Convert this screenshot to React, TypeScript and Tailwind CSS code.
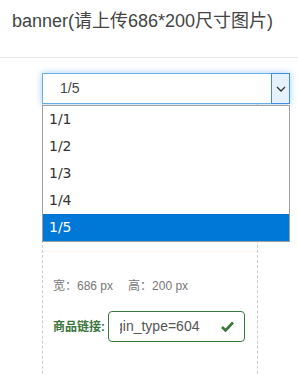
import React from "react";

const items = ["1/1", "1/2", "1/3", "1/4", "1/5"];

export default function App() {
  return (
    <div
      className="w-[298px] h-[375px] bg-white overflow-hidden"
      style={{ fontFamily: '"Liberation Sans", "Noto Sans CJK SC", sans-serif' }}
    >
      <div className="h-[58px] border-b border-[#e8e8e8] pl-[12px] pt-[9px] text-[18px] leading-[24px] text-[#444]">
        banner(请上传686*200尺寸图片)
      </div>

      <div className="relative ml-[42px] mt-[15px] w-[248px]">
        <div className="relative h-[31px] border border-[#66afe9] shadow-[0_0_7px_rgba(102,175,233,0.6)] bg-white flex items-center pl-[17px] text-[14px] text-[#444]">
          1/5
          <div className="absolute right-[-1px] top-[-1px] bottom-[-1px] w-[19px] bg-[#e5f1fb] border border-[#3c8ee0] flex items-center justify-center">
            <svg width="10" height="6" viewBox="0 0 10 6">
              <path d="M1 1 L5 5 L9 1" fill="none" stroke="#333" strokeWidth="1.3" />
            </svg>
          </div>
        </div>
        <div
          className="absolute left-0 top-[32px] w-[248px] border border-[#a0a0a0] bg-white z-10"
          style={{ fontFamily: '"DejaVu Sans", sans-serif' }}
        >
          {items.map((it) => (
            <div
              key={it}
              className={
                "h-[27px] flex items-center pl-[6px] text-[14px] " +
                (it === "1/5" ? "bg-[#0078d7] text-white" : "text-[#333]")
              }
            >
              {it}
            </div>
          ))}
        </div>
      </div>

      <div className="ml-[42px] w-[216px] h-[300px] border-x border-dashed border-[#cccccc] flex flex-col pt-[147px]">
        <div className="h-px bg-[#fcf3e6]" />
        <div className="mt-[26px] pl-[10px] text-[12px] leading-[16px] text-[#777] flex">
          <span>宽：686 px</span>
          <span className="ml-[15px]">高：200 px</span>
        </div>
        <div className="mt-[17px] pl-[10px] flex items-center">
          <span className="w-[55px] text-[12px] font-bold text-[#3c763d]">商品链接:</span>
          <div className="w-[137px] h-[31px] border border-[#3c763d] rounded-[4px] flex items-center pl-[11px] pr-[10px]">
            <div className="flex-1 overflow-hidden whitespace-nowrap text-[14px] text-[#555]">
              <span className="ml-[-5px]">gin_type=604</span>
            </div>
            <svg width="13" height="11" viewBox="0 0 13 11">
              <path d="M1 6 L4.5 9.5 L12 1.5" fill="none" stroke="#3c763d" strokeWidth="2.6" />
            </svg>
          </div>
        </div>
      </div>
    </div>
  );
}
